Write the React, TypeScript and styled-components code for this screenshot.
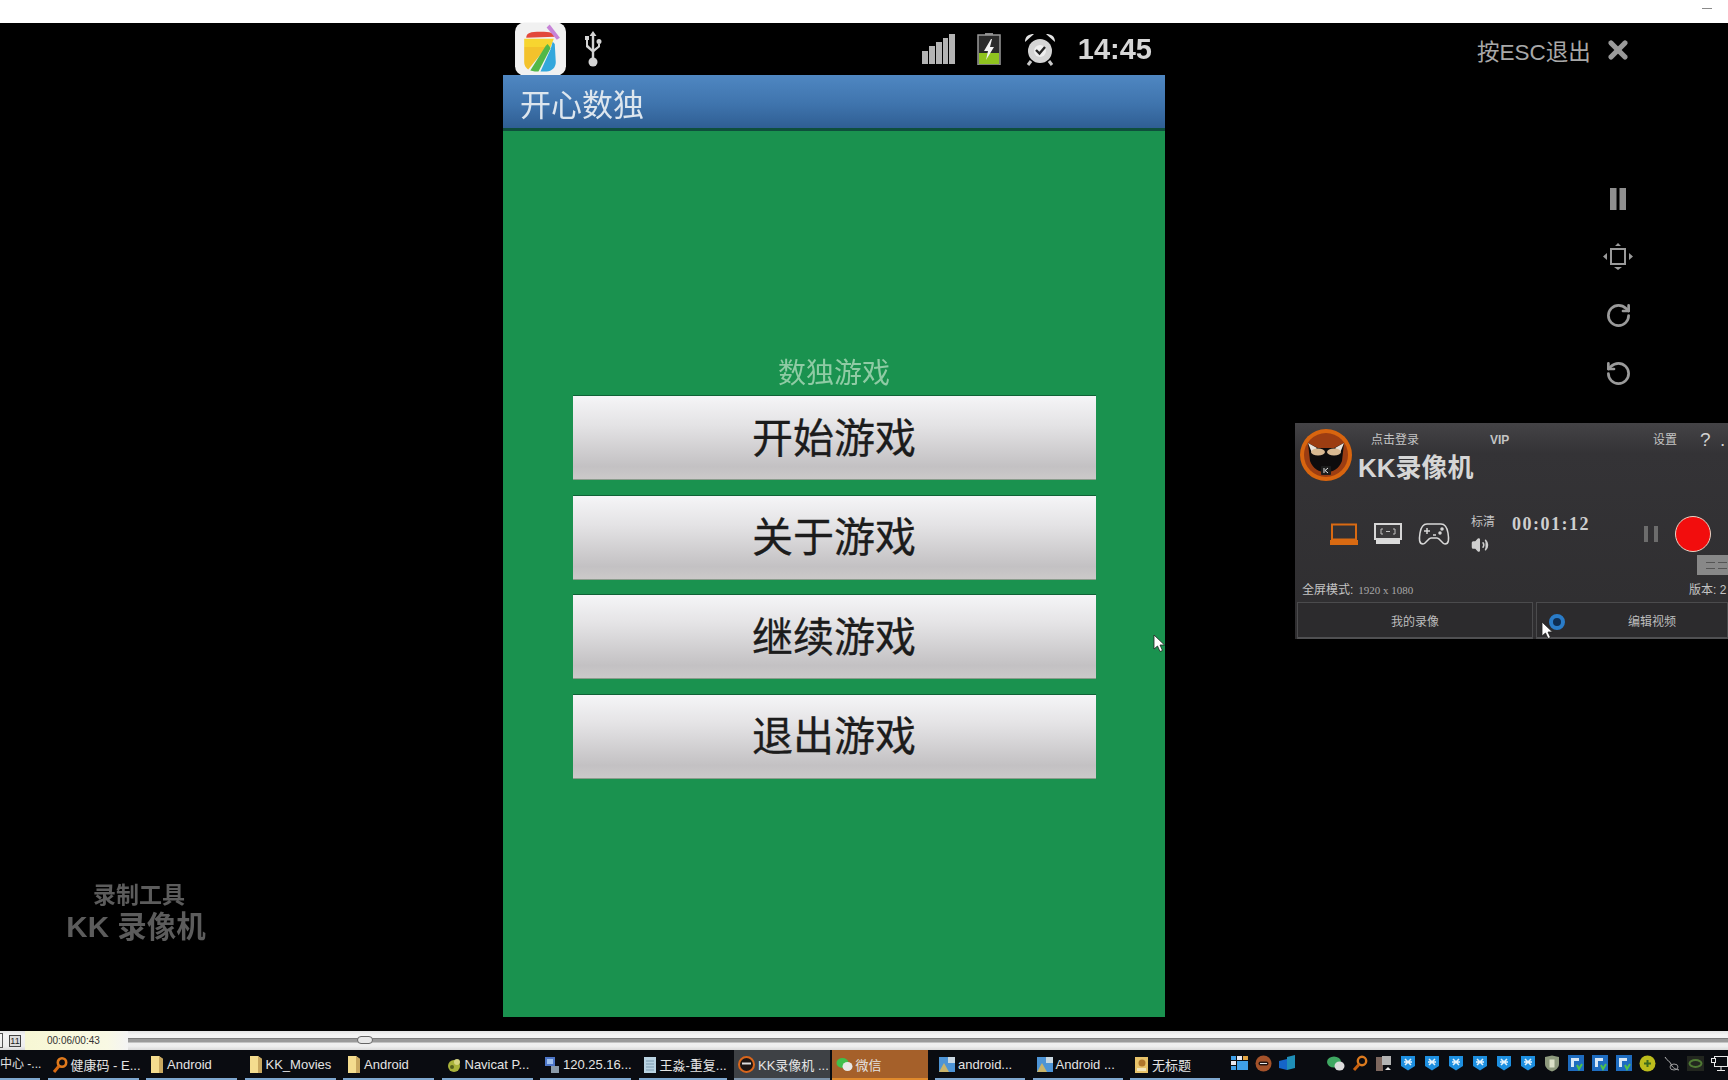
import styled, { createGlobalStyle } from 'styled-components';
import { RotateCcw, RotateCw, Volume2, X } from 'lucide-react';

type IconKind = 'search' | 'folder' | 'navicat' | 'remote' | 'note' | 'kk' | 'wechat' | 'pic' | 'paint';

// 任务栏按钮
const taskItems: { label: string; icon: IconKind; width: number; active?: 'kk' | 'wechat' }[] = [
  { label: '健康码 - E...', icon: 'search', width: 91 },
  { label: 'Android', icon: 'folder', width: 91 },
  { label: 'KK_Movies', icon: 'folder', width: 91 },
  { label: 'Android', icon: 'folder', width: 91 },
  { label: 'Navicat P...', icon: 'navicat', width: 91 },
  { label: '120.25.16...', icon: 'remote', width: 91 },
  { label: '王淼-重复...', icon: 'note', width: 88 },
  { label: 'KK录像机 ...', icon: 'kk', width: 96, active: 'kk' },
  { label: '微信', icon: 'wechat', width: 96, active: 'wechat' },
  { label: 'android...', icon: 'pic', width: 90 },
  { label: 'Android ...', icon: 'pic', width: 90 },
  { label: '无标题', icon: 'paint', width: 90 }
];

const menuButtons = ['开始游戏', '关于游戏', '继续游戏', '退出游戏'];

const trayKinds = [
  'grid', 'kk', 'flag', 'gap', 'wechat', 'search', 'drive',
  'blue', 'blue', 'blue', 'blue', 'blue', 'blue',
  'guard', 'vm', 'vm', 'vm', 'plus', 'mouse', 'nvidia', 'net'
];

const TaskIcon = ({ kind }: { kind: IconKind }) => {
  switch (kind) {
    case 'search':
      return (
        <svg width="16" height="18" viewBox="0 0 16 18">
          <circle cx="10" cy="6.5" r="4.2" fill="none" stroke="#e07a1c" strokeWidth="2.6" />
          <path d="M7 10 2 16" stroke="#d86a12" strokeWidth="3" />
        </svg>
      );
    case 'folder':
      return (
        <svg width="14" height="19" viewBox="0 0 14 19">
          <path d="M1 1h8l4 3v14H1z" fill="#f4dc8e" />
          <path d="M9 1l4 3v14H9z" fill="#c9a860" />
        </svg>
      );
    case 'navicat':
      return (
        <svg width="16" height="16" viewBox="0 0 16 16">
          <circle cx="8" cy="9" r="6" fill="#a9b23a" />
          <circle cx="11" cy="5" r="3" fill="#d7d680" />
          <circle cx="6" cy="10" r="2" fill="#55601c" />
        </svg>
      );
    case 'remote':
      return (
        <svg width="16" height="18" viewBox="0 0 16 18">
          <rect x="1" y="1" width="10" height="9" fill="#4d76c8" />
          <rect x="3" y="3" width="6" height="5" fill="#9fc0ee" />
          <rect x="7" y="10" width="8" height="7" fill="#8a9aa8" />
        </svg>
      );
    case 'note':
      return (
        <svg width="14" height="18" viewBox="0 0 14 18">
          <rect x="1" y="1" width="12" height="16" fill="#b9d3e2" />
          <path d="M3 5h8M3 8h8M3 11h8M3 14h8" stroke="#7d9bb0" />
        </svg>
      );
    case 'kk':
      return (
        <svg width="17" height="17" viewBox="0 0 17 17">
          <circle cx="8.5" cy="8.5" r="7.5" fill="#1c1513" stroke="#d9661c" strokeWidth="2" />
          <path d="M4 7.5h9" stroke="#ddd" strokeWidth="2" />
        </svg>
      );
    case 'wechat':
      return (
        <svg width="17" height="15" viewBox="0 0 17 15">
          <ellipse cx="6.5" cy="6" rx="6" ry="5" fill="#3fbf4b" />
          <ellipse cx="11.5" cy="9.5" rx="5" ry="4.5" fill="#e8e8e8" />
        </svg>
      );
    case 'pic':
      return (
        <svg width="16" height="17" viewBox="0 0 16 17">
          <rect x="0" y="1" width="16" height="15" fill="#4d94d6" />
          <path d="M9 1h7v6H9z" fill="#c9d8e2" />
          <path d="M0 16 5 7l5 9z" fill="#c9b46a" />
        </svg>
      );
    default:
      return (
        <svg width="15" height="18" viewBox="0 0 15 18">
          <rect x="1" y="1" width="13" height="16" fill="#e8c36a" />
          <circle cx="8" cy="7" r="3.5" fill="#b0762c" />
          <rect x="3" y="12" width="9" height="3" fill="#f3e6bc" />
        </svg>
      );
  }
};

const TrayIcon = ({ kind }: { kind: string }) => {
  switch (kind) {
    case 'grid':
      return (
        <svg width="17" height="16" viewBox="0 0 17 16">
          <rect x="0" y="1" width="5" height="4" fill="#3f9fe8" />
          <rect x="6" y="1" width="5" height="4" fill="#e8e8f0" />
          <rect x="12" y="1" width="5" height="4" fill="#e2a545" />
          <rect x="0" y="6" width="5" height="4" fill="#e8e8f0" />
          <rect x="6" y="6" width="11" height="9" fill="#3f9fe8" />
          <rect x="0" y="11" width="5" height="4" fill="#3f9fe8" />
        </svg>
      );
    case 'kk':
      return (
        <svg width="17" height="17" viewBox="0 0 17 17">
          <circle cx="8.5" cy="8.5" r="8" fill="#a4522a" />
          <rect x="3.5" y="6.5" width="10" height="4" rx="2" fill="#221512" />
          <path d="M5 8.500h7" stroke="#e6e6e6" />
        </svg>
      );
    case 'flag':
      return (
        <svg width="17" height="16" viewBox="0 0 17 16">
          <path d="M0 6l8-2v11l-8-2z" fill="#1565c8" />
          <path d="M8 2l8-2v13l-8 2z" fill="#1f8fb8" />
        </svg>
      );
    case 'wechat':
      return (
        <svg width="18" height="15" viewBox="0 0 18 15">
          <ellipse cx="7" cy="6" rx="7" ry="5.5" fill="#3fa862" />
          <ellipse cx="12.5" cy="10" rx="5" ry="4.5" fill="#dcdcdc" />
        </svg>
      );
    case 'search':
      return (
        <svg width="16" height="17" viewBox="0 0 16 17">
          <circle cx="10" cy="6" r="4.2" fill="none" stroke="#dc7a1e" strokeWidth="2.4" />
          <path d="M7 9.500 2 15" stroke="#c8600f" strokeWidth="3" />
        </svg>
      );
    case 'drive':
      return (
        <svg width="16" height="17" viewBox="0 0 16 17">
          <rect x="0" y="2" width="7" height="14" fill="#7d675e" />
          <rect x="6" y="1" width="9" height="9" fill="#b3b3b3" />
          <path d="M9 15l3-3 3 3z" fill="#ececec" />
        </svg>
      );
    case 'blue':
      return (
        <svg width="16" height="16" viewBox="0 0 16 16">
          <path d="M1 1h14v10l-7 4.500L1 11z" fill="#1d8fe0" />
          <path d="M5 4l6 6M11 4l-6 6M4 7h8" stroke="#e4f2fb" strokeWidth="1.6" />
        </svg>
      );
    case 'guard':
      return (
        <svg width="16" height="17" viewBox="0 0 16 17">
          <path d="M1 2l7-1.500L15 2v7c0 4-4 6.500-7 7.500-3-1-7-3.500-7-7.500z" fill="#8e9a7e" />
          <path d="M5.500 4.500h5v8h-5z" fill="#dbe0c8" />
        </svg>
      );
    case 'vm':
      return (
        <svg width="16" height="16" viewBox="0 0 16 16">
          <rect width="16" height="16" fill="#1e6cc0" />
          <path d="M3 3h8v3H6v6H3z" fill="#d8e8f6" />
          <path d="M9 10l2 4 3-5" stroke="#4fc24a" strokeWidth="2" fill="none" />
        </svg>
      );
    case 'plus':
      return (
        <svg width="17" height="17" viewBox="0 0 17 17">
          <circle cx="8.5" cy="8.5" r="8" fill="#bcbc1c" />
          <path d="M8.500 5v7M5 8.500h7" stroke="#3d6a1e" strokeWidth="2" />
        </svg>
      );
    case 'mouse':
      return (
        <svg width="17" height="17" viewBox="0 0 17 17">
          <path d="M2 2c2 4 5 4 6 7s3 5 8 6" stroke="#b5b5b5" fill="none" />
          <ellipse cx="11" cy="12" rx="4" ry="3" fill="none" stroke="#9c9c9c" />
        </svg>
      );
    case 'nvidia':
      return (
        <svg width="17" height="15" viewBox="0 0 17 15">
          <rect width="17" height="15" fill="#22261f" />
          <ellipse cx="8.500" cy="7.500" rx="6" ry="3.500" fill="none" stroke="#4f7a34" strokeWidth="2" />
        </svg>
      );
    case 'net':
      return (
        <svg width="17" height="15" viewBox="0 0 17 15" fill="none" stroke="#e8e8e8">
          <rect x="3.500" y=".5" width="13" height="10" />
          <rect x=".5" y="2.500" width="4" height="4" fill="#0b0c10" />
          <path d="M10 11v3M6 14.500h8" />
        </svg>
      );
    default:
      return <span />;
  }
};

const AppBadge = () => (
  <svg width="53" height="54" viewBox="0 0 52 52">
    <rect x="1" y="0" width="50" height="52" rx="9" fill="#f1f1f1" />
    <path d="M12 15c0-5 4-6 14-6s13 1 14 5z" fill="#e2483b" />
    <path d="M35 2l10 13-3 2L32 5z" fill="#c783d8" />
    <path d="M10 16h29l-3 8H10z" fill="#f7d530" />
    <path d="M10 24h22L14 46c-3-2-4-4-4-8z" fill="#f3c22c" />
    <path d="M33 21l-2 2-15 24c3 1 6 1 8 1l12-23z" fill="#52b848" />
    <path d="M38 19l2 2 1 18c0 5-4 9-9 9h-6l10-22z" fill="#33a7dc" />
  </svg>
);

const UsbIcon = () => (
  <svg width="22" height="36" viewBox="0 0 22 36" fill="#d4d4d4">
    <path d="M11 0l3.500 5h-2.300v22h-2.400V5H7.500z" />
    <circle cx="11" cy="31" r="4.500" />
    <path d="M4 9h2v5l4 4v3l-6-5zM3 5h4v4H3z" />
    <path d="M16 12h2v4l-6 5v-3l4-3zM17 8a2.500 2.500 0 110 5 2.500 2.500 0 010-5z" />
  </svg>
);

const SignalIcon = () => (
  <svg width="33" height="30" viewBox="0 0 33 30" fill="#b4b4b4">
    <rect x="0" y="17" width="6" height="13" />
    <rect x="7" y="12" width="6" height="18" />
    <rect x="14" y="8" width="6" height="22" />
    <rect x="21" y="4" width="5" height="26" />
    <rect x="27" y="0" width="6" height="30" />
  </svg>
);

const BatteryIcon = () => (
  <svg width="24" height="32" viewBox="0 0 24 32">
    <rect x="8" y="0" width="8" height="3" fill="#8a8a8a" />
    <rect x="1" y="2" width="22" height="30" fill="#2a2a2a" stroke="#999" strokeWidth="1.500" />
    <rect x="2" y="20" width="20" height="11" fill="#8fc31f" />
    <path d="M14 6l-7 12h4l-2 9 8-13h-4l2-8z" fill="#f2f2f2" />
  </svg>
);

const AlarmIcon = () => (
  <svg width="34" height="34" viewBox="0 0 34 34">
    <circle cx="17" cy="19" r="12" fill="#d4d4d4" />
    <circle cx="17" cy="19" r="6" fill="#efefef" />
    <path d="M13 18l3.500 3.500L22 15" stroke="#222" strokeWidth="2.400" fill="none" />
    <path d="M2 10C2 4 6 2 11 2zM32 10c0-6-4-8-9-8z" fill="#e4e4e4" />
    <path d="M8 29l-3 4M26 29l3 4" stroke="#c8c8c8" strokeWidth="3" />
  </svg>
);

const PauseIcon = () => (
  <svg width="18" height="24" viewBox="0 0 18 24" fill="#8f8f8f">
    <rect x="1" y="1" width="6.500" height="22" />
    <rect x="10.500" y="1" width="6.500" height="22" />
  </svg>
);

const FitIcon = () => (
  <svg width="30" height="28" viewBox="0 0 30 28" fill="#9a9a9a">
    <rect x="8" y="6" width="14" height="15" fill="none" stroke="#9a9a9a" strokeWidth="2" />
    <path d="M15 0l3 3h-6zM15 27l-4-3h8zM0 13.500L4 10v7zM30 13.500L26 10v7z" />
  </svg>
);

const CatLogo = () => (
  <svg width="54" height="54" viewBox="0 0 54 54">
    <circle cx="27" cy="27" r="26" fill="#d8650f" />
    <circle cx="27" cy="27" r="22" fill="#9c3d12" />
    <path d="M9 15l10 5h16l10-5-2 18c-3 8-9 11-16 11s-13-3-16-11z" fill="#0e0c0d" />
    <path d="M9 15l9 5-5 5zM45 15l-9 5 5 5z" fill="#e9e4dc" />
    <ellipse cx="19" cy="24" rx="7" ry="3.500" fill="#d9b992" />
    <ellipse cx="35" cy="24" rx="7" ry="3.500" fill="#d9b992" />
    <rect x="22" y="38" width="10" height="9" rx="1" fill="#1c1c1c" />
    <path d="M25 40v5M29 40l-3 2.500 3 2.500" stroke="#e8e8e8" fill="none" />
  </svg>
);

const LaptopIcon = () => (
  <svg width="28" height="22" viewBox="0 0 28 22">
    <rect x="2" y="1.500" width="24" height="15" fill="none" stroke="#d96a12" strokeWidth="2" />
    <rect x="0" y="17" width="28" height="5" fill="#d96a12" />
  </svg>
);

const MonitorIcon = () => (
  <svg width="28" height="22" viewBox="0 0 28 22">
    <rect x="1" y="1" width="26" height="15" fill="#3a393b" stroke="#d6d6d6" strokeWidth="2" />
    <path d="M9 6H7v5h2M19 6h2v5h-2M12 8.500h4" stroke="#c0c0c0" fill="none" />
    <rect x="2" y="17" width="24" height="4" fill="#dcdcdc" />
  </svg>
);

const PadIcon = () => (
  <svg width="32" height="24" viewBox="0 0 32 24" fill="none" stroke="#d8d8d8" strokeWidth="1.500">
    <path d="M9 2h14c4 0 6 3 7 9s1 11-3 11c-3 0-5-6-8-6h-6c-3 0-5 6-8 6-4 0-4-5-3-11S5 2 9 2z" />
    <path d="M6 9h6M9 6v6M15 13h3" />
    <circle cx="24" cy="7" r="1" fill="#d8d8d8" />
    <circle cx="22" cy="11" r="1" fill="#d8d8d8" />
  </svg>
);

const CursorIcon = () => (
  <svg width="12" height="18" viewBox="0 0 12 18">
    <path d="M1 1v14l3.500-3 2.500 5.500 2.500-1L7 11h4.500z" fill="#fff" stroke="#222" strokeWidth=".8" />
  </svg>
);

const App = () => {
  return (
    <Screen>
      <GlobalStyle />
      <TopBar>
        <MinimizeMark />
      </TopBar>
      <Stage>
        <LeftColumn>
          <Watermark>
            <WatermarkTop>录制工具</WatermarkTop>
            <WatermarkBrand>KK 录像机</WatermarkBrand>
          </Watermark>
        </LeftColumn>

        <Phone>
          <StatusBar>
            <AppBadge />
            <UsbWrap>
              <UsbIcon />
            </UsbWrap>
            <StatusRight>
              <SignalIcon />
              <BatteryIcon />
              <AlarmIcon />
              <Clock>14:45</Clock>
            </StatusRight>
          </StatusBar>
          <ActionBar>开心数独</ActionBar>
          <GameBody>
            <GameLabel>数独游戏</GameLabel>
            <MenuList>
              {menuButtons.map((text) => (
                <MenuButton key={text}>{text}</MenuButton>
              ))}
            </MenuList>
          </GameBody>
          <PhoneCursor>
            <CursorIcon />
          </PhoneCursor>
        </Phone>

        <RightColumn>
          <ExitRow>
            <ExitText>按ESC退出</ExitText>
            <X size={28} color="#9a9a9a" strokeWidth={4.5} />
          </ExitRow>
          <SideControls>
            <SideButton>
              <PauseIcon />
            </SideButton>
            <SideButton>
              <FitIcon />
            </SideButton>
            <SideButton>
              <RotateCw size={27} color="#9a9a9a" strokeWidth={2.4} />
            </SideButton>
            <SideButton>
              <RotateCcw size={27} color="#9a9a9a" strokeWidth={2.4} />
            </SideButton>
          </SideControls>

          <RecorderPanel>
            <PanelHead>
              <CatLogo />
              <HeadText>
                <LoginRow>
                  <LoginLink>点击登录</LoginLink>
                  <VipLink>VIP</VipLink>
                  <PanelText>设置</PanelText>
                  <HelpMark>?</HelpMark>
                  <HelpMark>.</HelpMark>
                </LoginRow>
                <Brand>KK录像机</Brand>
              </HeadText>
            </PanelHead>
            <ControlRow>
              <ModeIcons>
                <LaptopIcon />
                <MonitorIcon />
                <PadIcon />
              </ModeIcons>
              <QualityStack>
                <PanelText>标清</PanelText>
                <Volume2 size={18} color="#cfcfcf" fill="#cfcfcf" />
              </QualityStack>
              <Timer>00:01:12</Timer>
              <RecordPause>
                <i />
                <i />
              </RecordPause>
              <RecordDot />
              <GreyChip>
                <span />
                <span />
              </GreyChip>
            </ControlRow>
            <InfoRow>
              <InfoLeft>
                <PanelText>全屏模式:</PanelText>
                <Resolution>1920 x 1080</Resolution>
              </InfoLeft>
              <PanelText>版本: 2</PanelText>
            </InfoRow>
            <TabRow>
              <PanelTab $width={236}>我的录像</PanelTab>
              <EditTab $width={192}>
                <BlueRing />
                <TabCursor>
                  <CursorIcon />
                </TabCursor>
                编辑视频
              </EditTab>
            </TabRow>
          </RecorderPanel>
        </RightColumn>
      </Stage>

      <PlayerBar>
        <PlayerToggle />
        <PlayerIndex>11</PlayerIndex>
        <TimeField>00:06/00:43</TimeField>
        <SliderTrack>
          <SliderThumb />
        </SliderTrack>
      </PlayerBar>

      <TaskBar>
        <TaskEdge>中心 -...</TaskEdge>
        {taskItems.map((item, index) => (
          <TaskButton key={index} $width={item.width} $active={item.active}>
            <TaskIcon kind={item.icon} />
            <TaskLabel>{item.label}</TaskLabel>
          </TaskButton>
        ))}
        <Tray>
          {trayKinds.map((kind, index) => (
            <TraySlot key={index}>
              <TrayIcon kind={kind} />
            </TraySlot>
          ))}
        </Tray>
      </TaskBar>
    </Screen>
  );
};

export default App;

const GlobalStyle = createGlobalStyle`
  html, body {
    margin: 0;
    padding: 0;
    background: #000;
  }
  * {
    box-sizing: border-box;
  }
  body {
    font-family: 'Liberation Sans', 'Noto Sans CJK SC', sans-serif;
  }
`;

const Screen = styled.div`
  width: 1728px;
  height: 1080px;
  display: flex;
  flex-direction: column;
  overflow: hidden;
  background: #000;
`;

const TopBar = styled.div`
  height: 23px;
  flex: none;
  background: #fff;
  display: flex;
  justify-content: flex-end;
  padding: 8px 16px 0 0;
`;

const MinimizeMark = styled.div`
  width: 10px;
  height: 1px;
  background: #8a8a8a;
`;

const Stage = styled.div`
  height: 1008px;
  flex: none;
  display: flex;
`;

const LeftColumn = styled.div`
  width: 503px;
  flex: none;
  display: flex;
  align-items: flex-end;
  padding: 0 0 86px 66px;
`;

const Watermark = styled.div`
  width: 140px;
  display: flex;
  flex-direction: column;
  align-items: center;
  color: #5c5c5c;
  font-weight: 700;
  filter: blur(0.5px);
`;

const WatermarkTop = styled.div`
  font-size: 23px;
  line-height: 28px;
  margin-left: 6px;
`;

const WatermarkBrand = styled.div`
  font-size: 29.5px;
  line-height: 36px;
  white-space: nowrap;
`;

const Phone = styled.div`
  position: relative;
  width: 662px;
  height: 994px;
  flex: none;
  display: flex;
  flex-direction: column;
`;

const StatusBar = styled.div`
  height: 52px;
  flex: none;
  display: flex;
  align-items: center;
  padding: 0 13px 0 11px;
`;

const UsbWrap = styled.div`
  margin-left: 15px;
  display: flex;
`;

const StatusRight = styled.div`
  margin-left: auto;
  display: flex;
  align-items: center;
  gap: 22px;
`;

const Clock = styled.div`
  font-size: 29px;
  font-weight: 700;
  color: #d6d6d6;
  margin-left: -1px;
  filter: blur(0.4px);
`;

const ActionBar = styled.div`
  height: 56px;
  flex: none;
  display: flex;
  align-items: center;
  padding: 2px 0 0 17px;
  font-size: 31px;
  color: #dde6ee;
  background: linear-gradient(#4f87c2, #3f74ad 55%, #2f5e93);
  border-bottom: 3px solid #0e4f3c;
  filter: blur(0.4px);
`;

const GameBody = styled.div`
  flex: 1;
  background: #1a924f;
  display: flex;
  flex-direction: column;
  align-items: center;
  padding-top: 226px;
`;

const GameLabel = styled.div`
  font-size: 28px;
  line-height: 34px;
  color: #8fcba4;
  filter: blur(0.4px);
`;

const MenuList = styled.div`
  display: flex;
  flex-direction: column;
  gap: 16.5px;
  margin-top: 5px;
`;

const MenuButton = styled.div`
  width: 523px;
  height: 83px;
  display: flex;
  align-items: center;
  justify-content: center;
  padding-bottom: 6px;
  font-size: 41px;
  color: #1c1c1c;
  -webkit-text-stroke: 0.3px #1c1c1c;
  background: linear-gradient(#f5f5f7, #e4e3e5 35%, #c3c1c3 85%, #cbc9c9);
  box-shadow: 0 -1px 0 #0f6136, 0 1px 0 #8a9c8c;
`;

const PhoneCursor = styled.div`
  position: absolute;
  left: 650px;
  top: 611px;
  display: flex;
`;

const RightColumn = styled.div`
  flex: 1;
  min-width: 0;
  display: flex;
  flex-direction: column;
`;

const ExitRow = styled.div`
  margin: 11px 0 0 312px;
  height: 32px;
  display: flex;
  align-items: center;
  gap: 15px;
`;

const ExitText = styled.div`
  width: 112px;
  font-size: 22.5px;
  color: #a8a8a8;
  white-space: nowrap;
`;

const SideControls = styled.div`
  margin: 104px 0 0 431px;
  width: 44px;
  display: flex;
  flex-direction: column;
`;

const SideButton = styled.div`
  height: 58px;
  display: flex;
  align-items: center;
  justify-content: center;
`;

const RecorderPanel = styled.div`
  position: relative;
  margin: 21px 0 0 130px;
  width: 433px;
  height: 216px;
  overflow: hidden;
  background: linear-gradient(#444346, #343336 14%, #2f2e30);
  color: #c4c4c4;
`;

const PanelHead = styled.div`
  height: 73px;
  display: flex;
  padding: 5px 0 0 4px;
  svg {
    flex: none;
  }
`;

const HeadText = styled.div`
  margin-left: 5px;
  min-width: 0;
  flex: 1;
  display: flex;
  flex-direction: column;
  padding-top: 1px;
`;

const LoginRow = styled.div`
  display: grid;
  grid-template-columns: 132px 163px 47px 20px 6px;
  height: 22px;
  align-items: center;
`;

const PanelText = styled.span`
  font-size: 12px;
  line-height: 16px;
  white-space: nowrap;
`;

const LoginLink = styled(PanelText)`
  padding-left: 13px;
`;

const VipLink = styled(PanelText)`
  font-weight: 700;
`;

const HelpMark = styled.span`
  font-size: 19px;
  color: #d2d2d2;
`;

const Brand = styled.div`
  margin-top: 2px;
  font-size: 26px;
  line-height: 30px;
  font-weight: 700;
  color: #d6d6d6;
  white-space: nowrap;
`;

const ControlRow = styled.div`
  margin-top: 14px;
  height: 48px;
  display: flex;
  align-items: center;
  padding-left: 35px;
`;

const ModeIcons = styled.div`
  display: flex;
  align-items: center;
  gap: 16px;
`;

const QualityStack = styled.div`
  margin-left: 21px;
  display: flex;
  flex-direction: column;
  gap: 6px;
`;

const Timer = styled.div`
  margin: 0 0 20px 17px;
  width: 80px;
  font-family: 'Liberation Serif', serif;
  font-size: 18px;
  font-weight: 700;
  letter-spacing: 1.5px;
  color: #cfcfcf;
  white-space: nowrap;
`;

const RecordPause = styled.div`
  margin-left: 52px;
  width: 14px;
  height: 16px;
  display: flex;
  justify-content: space-between;
  i {
    width: 4px;
    background: #6c6c6c;
  }
`;

const RecordDot = styled.div`
  margin-left: 17px;
  width: 36px;
  height: 36px;
  flex: none;
  border-radius: 50%;
  background: #f20d0d;
  border: 1.5px solid #e6d5c6;
`;

const GreyChip = styled.div`
  position: absolute;
  left: 402px;
  top: 132px;
  width: 31px;
  height: 20px;
  background: #888;
  display: flex;
  align-items: center;
  gap: 3px;
  padding-left: 9px;
  span {
    width: 9px;
    height: 7px;
    border-top: 1px solid #555;
    border-bottom: 1px solid #555;
  }
`;

const InfoRow = styled.div`
  margin-top: 22px;
  height: 20px;
  display: flex;
  align-items: center;
  padding-left: 7px;
`;

const InfoLeft = styled.div`
  width: 387px;
  display: flex;
  align-items: center;
  gap: 5px;
  flex: none;
`;

const Resolution = styled.span`
  font-family: 'Liberation Serif', serif;
  font-size: 11px;
  color: #a8a8a8;
`;

const TabRow = styled.div`
  margin-top: 2px;
  height: 37px;
  display: flex;
  gap: 3px;
  padding-left: 2px;
`;

const PanelTab = styled.div<{ $width: number }>`
  position: relative;
  width: ${(props) => props.$width}px;
  flex: none;
  display: flex;
  align-items: center;
  justify-content: center;
  font-size: 12px;
  color: #bdbdbd;
  background: #2c2b2d;
  border: 1px solid #4b4b4d;
  border-bottom: 2px solid #505052;
`;

const EditTab = styled(PanelTab)`
  padding-left: 40px;
`;

const BlueRing = styled.div`
  position: absolute;
  left: 12px;
  top: 11px;
  width: 16px;
  height: 16px;
  border-radius: 50%;
  border: 4px solid #2a7cc8;
  background: #0f2e52;
`;

const TabCursor = styled.div`
  position: absolute;
  left: 4px;
  top: 18px;
  display: flex;
`;

const PlayerBar = styled.div`
  height: 19px;
  flex: none;
  display: flex;
  align-items: center;
  background: linear-gradient(#e4e4e4, #f4f4f4 20%, #efefef 80%, #dadada);
`;

const PlayerToggle = styled.div`
  width: 3px;
  height: 15px;
  border: 1px solid #555;
  border-left: none;
`;

const PlayerIndex = styled.div`
  width: 12px;
  height: 12px;
  margin-left: 6px;
  border: 1px solid #444;
  background: #dcdcdc;
  font-size: 9px;
  line-height: 10px;
  text-align: center;
  color: #222;
`;

const TimeField = styled.div`
  width: 103px;
  height: 19px;
  margin-left: 4px;
  display: flex;
  align-items: center;
  padding-left: 22px;
  font-size: 10px;
  color: #333;
  background: linear-gradient(90deg, #f7f7d4, #f9f9e4 80%, #f4f4f4);
`;

const SliderTrack = styled.div`
  position: relative;
  flex: 1;
  height: 5px;
  background: #9a9a9a;
  border-top: 1px solid #7c7c7c;
  border-bottom: 1px solid #c4c4c4;
`;

const SliderThumb = styled.div`
  position: absolute;
  left: 229px;
  top: -3px;
  width: 16px;
  height: 8px;
  border: 1.5px solid #666;
  border-radius: 4px;
  background: #e8e8e8;
`;

const TaskBar = styled.div`
  height: 30px;
  flex: none;
  display: flex;
  background: #0a0c11;
  gap: 7.5px;
`;

const TaskEdge = styled.div`
  width: 40px;
  flex: none;
  white-space: nowrap;
  font-size: 12px;
  line-height: 29px;
  color: #e2e2e2;
  box-shadow: inset 0 -2px 0 #7ea7cf;
`;

const TaskButton = styled.div<{ $width: number; $active?: 'kk' | 'wechat' }>`
  width: ${(props) => props.$width}px;
  flex: none;
  display: flex;
  align-items: center;
  gap: 3px;
  padding: 0 0 1px 4px;
  white-space: nowrap;
  margin-left: ${(props) => (props.$active === 'wechat' ? '-6px' : '0')};
  background: ${(props) =>
    props.$active === 'wechat' ? '#a5602a' : props.$active === 'kk' ? '#3e4145' : 'transparent'};
  box-shadow: inset 0 -2px 0
    ${(props) => (props.$active === 'wechat' ? '#e08a2c' : props.$active === 'kk' ? '#7d92a8' : '#7ea7cf')};
  svg {
    flex: none;
  }
`;

const TaskLabel = styled.span`
  font-size: 13px;
  color: #e4e4e4;
`;

const Tray = styled.div`
  margin-left: auto;
  display: flex;
  padding: 0 3px 4px 0;
  align-items: center;
`;

const TraySlot = styled.div`
  width: 24px;
  display: flex;
  align-items: center;
  justify-content: center;
`;
